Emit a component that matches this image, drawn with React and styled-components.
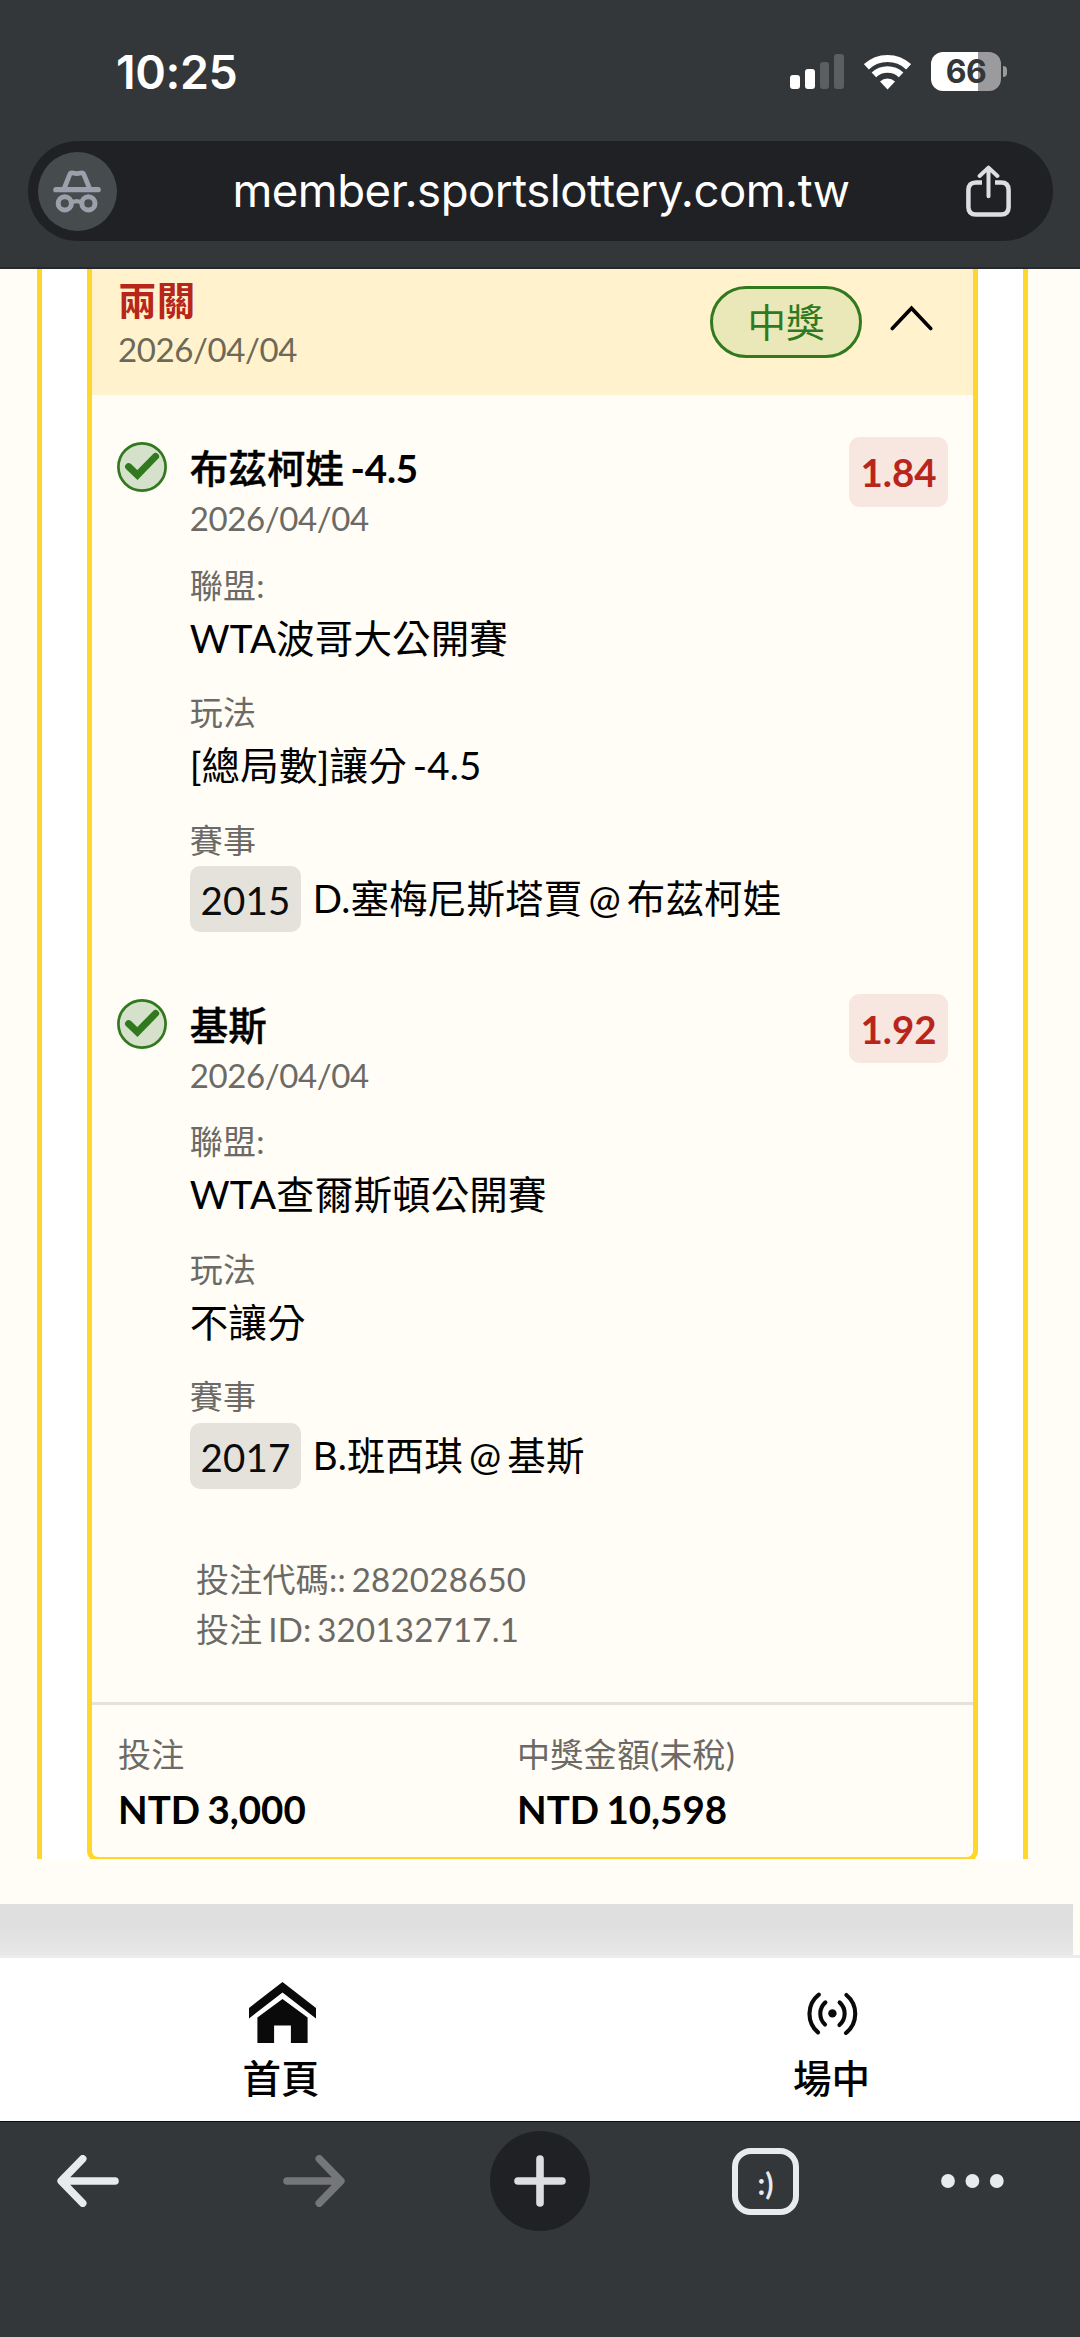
import React from "react";
import styled, { createGlobalStyle } from "styled-components";

const LATO = `Lato, "Noto Sans CJK TC", sans-serif`;
const SYSTEM = `Inter, "Noto Sans CJK TC", sans-serif`;

const GlobalStyle = createGlobalStyle`
  *, *::before, *::after { box-sizing: border-box; }
  body { margin: 0; background: #33373a; }
  svg { display: block; flex: none; }
`;

const Screen = styled.div`
  width: 1080px;
  height: 2337px;
  display: flex;
  flex-direction: column;
  overflow: hidden;
  background: #33373a;
  font-family: ${LATO};
  color: #000;
`;

/* ---------- browser chrome, top ---------- */

const TopChrome = styled.header`
  height: 269px;
  flex: none;
  font-family: ${SYSTEM};
  border-bottom: 2px solid #26292b;
`;

const StatusBar = styled.div`
  height: 141px;
  padding: 0 73px 0 116px;
  display: flex;
  justify-content: space-between;
`;

const Clock = styled.div`
  margin-top: 44px;
  line-height: 56px;
  font-size: 46.5px;
  font-weight: 600;
  letter-spacing: -0.4px;
  color: #fff;
`;

const StatusIcons = styled.div`
  margin-top: 52px;
  height: 39px;
  display: flex;
  align-items: center;
`;

const Signal = styled.div`
  display: flex;
  align-items: flex-end;
  gap: 5px;
  height: 35px;
  margin-right: 20px;
`;

const Bar = styled.i`
  width: 9.7px;
  height: ${(p) => p.$h}px;
  border-radius: 3px;
  background: ${(p) => (p.$on ? "#fff" : "#5d5e60")};
`;

const Battery = styled.div`
  width: 70px;
  height: 39px;
  margin-left: 20px;
  border-radius: 12px;
  background: linear-gradient(90deg, #fff 67%, #9b9b9d 67%);
  color: #33373a;
  font-size: 32px;
  font-weight: 700;
  letter-spacing: -0.5px;
  line-height: 39px;
  text-align: center;
`;

const Nub = styled.i`
  width: 4px;
  height: 11px;
  margin-left: 2px;
  border-radius: 0 6px 6px 0;
  background: #9b9b9d;
`;

const AddressBar = styled.div`
  margin: 0 27.5px;
  height: 100px;
  padding: 0 42px 0 10px;
  border-radius: 50px;
  background: #202125;
  display: flex;
  align-items: center;
  justify-content: space-between;
`;

const Incognito = styled.div`
  width: 79px;
  height: 79px;
  border-radius: 50%;
  background: #464b4e;
  display: flex;
  align-items: center;
  justify-content: center;
`;

const Url = styled.div`
  flex: 1;
  text-align: center;
  font-size: 45.5px;
  line-height: 56px;
  letter-spacing: -0.48px;
  color: #fff;
  white-space: nowrap;
`;

/* ---------- page ---------- */

const Page = styled.main`
  height: 1686px;
  flex: none;
  background: #fffdf5;
`;

const Viewport = styled.div`
  height: 1590px;
  overflow: hidden;
  padding: 0 52px 0 37px;
`;

const Frame = styled.div`
  padding: 0 45px;
  border: solid #ffd72b;
  border-width: 0 5px;
  background: #fff;
`;

const Card = styled.article`
  height: 1593px;
  border: solid #ffd72b;
  border-width: 0 5px 5px;
  border-radius: 0 0 11px 11px;
  background: #fffdf5;
`;

const CardHeader = styled.div`
  height: 126px;
  padding: 8px 40px 0 26px;
  display: flex;
  align-items: flex-start;
  background: #fff2cc;
`;

const HeaderText = styled.div`
  flex: 1;
`;

const Title = styled.div`
  font-size: 38.5px;
  line-height: 46px;
  font-weight: 700;
  letter-spacing: 0.2px;
  color: #b8261b;
`;

const Small = styled.div`
  font-size: 33px;
  line-height: 40px;
  letter-spacing: 0.3px;
  color: #6b6a66;
`;

const DateLine = styled(Small)`
  margin-top: ${(p) => p.$mt}px;
  letter-spacing: -0.4px;
  color: ${(p) => p.$c || "#6b6a66"};
`;

const ResultPill = styled.div`
  width: 152px;
  height: 72px;
  margin: 9px 28px 0 0;
  border: 3px solid #31791f;
  border-radius: 36px;
  background: #eae7b8;
  color: #31791f;
  font-size: 38.5px;
  line-height: 66px;
  text-align: center;
`;

const Toggle = styled.div`
  margin-top: 28px;
`;

const Leg = styled.section`
  height: 556.5px;
  display: flex;
  align-items: flex-start;
  padding: 0 25px;
`;

const Legs = styled.div`
  padding-top: 42px;
`;

const Mark = styled.div`
  margin-top: 5px;
  width: 50px;
`;

const LegBody = styled.div`
  flex: 1;
  padding: 8px 0 0 22.7px;
`;

const Pick = styled.div`
  font-size: 38.5px;
  line-height: 46px;
  font-weight: 500;
  letter-spacing: 0.1px;
  -webkit-text-stroke: 0.4px #000;
`;

const Handicap = styled.span`
  margin-left: 6.5px;
  font-weight: 700;
  letter-spacing: -0.2px;
  -webkit-text-stroke: 0;
`;

const Field = styled.div`
  margin-top: ${(p) => p.$mt}px;
`;

const Value = styled.div`
  margin-top: 10px;
  margin-bottom: -0.5px;
  font-size: 38.5px;
  line-height: 46px;
  letter-spacing: 0.15px;
  word-spacing: -4px;
  white-space: nowrap;
`;

const Match = styled.div`
  margin-top: 6.5px;
  display: flex;
  font-size: 38.5px;
  line-height: 64px;
  letter-spacing: 0.15px;
  word-spacing: -4px;
  white-space: nowrap;
`;

const Code = styled.span`
  width: 111.5px;
  height: 66.3px;
  margin-right: 11.5px;
  border-radius: 10px;
  background: #e5e2dc;
  color: #0c0c0c;
  line-height: 68px;
  text-align: center;
`;

const Odds = styled.div`
  width: 99px;
  height: 69.5px;
  border-radius: 11px;
  background: #f8e6e0;
  color: #b8261b;
  font-size: 38.5px;
  line-height: 70px;
  font-weight: 700;
  text-align: center;
`;

const Codes = styled.div`
  height: 152px;
  padding: 3.5px 0 0 104px;
`;

const CodeLine = styled.div`
  font-size: 33px;
  line-height: 50px;
  letter-spacing: 0.25px;
  word-spacing: -3px;
  color: #6b6a66;
`;

const Totals = styled.div`
  border-top: 3px solid #e5e2dc;
  padding: 28.5px 26px 0;
  display: grid;
  grid-template-columns: 399px 1fr;
`;

const Amount = styled.div`
  margin-top: 12.5px;
  font-size: 38.5px;
  line-height: 46px;
  font-weight: 700;
  word-spacing: -2px;
`;

const NextBlock = styled.div`
  width: 1073px;
  height: 51px;
  margin-top: 45px;
  background: linear-gradient(#dedede, #e0e0e0 45%, #e7e7e7);
`;

/* ---------- bottom ---------- */

const TabNav = styled.nav`
  height: 167px;
  flex: none;
  display: flex;
  background: #fff;
  border-top: 3px solid #ececec;
  border-bottom: 1px solid #0d0e0f;
`;

const Tab = styled.div`
  width: ${(p) => p.$w}px;
  padding-left: ${(p) => p.$pl}px;
  display: flex;
  flex-direction: column;
  align-items: center;
  font-size: 38.5px;
  font-weight: 500;
  line-height: 46px;
`;

const TabIcon = styled.div`
  height: 97px;
  padding: ${(p) => p.$pt}px 0 0 2px;
`;

const Toolbar = styled.footer`
  flex: 1;
  display: flex;
  align-items: flex-start;
  padding: 9px 77px 0 57px;
`;

const Tool = styled.div`
  height: 100px;
  width: ${(p) => p.$w}px;
  margin-right: ${(p) => p.$mr || 0}px;
  display: flex;
  align-items: center;
  justify-content: center;
`;

const NewTab = styled(Tool)`
  border-radius: 50%;
  background: #202125;
`;

const TabSwitch = styled.div`
  width: 67px;
  height: 67px;
  border: 6px solid #e8ebee;
  border-radius: 19px;
  color: #e8ebee;
  font-family: Lato, sans-serif;
  font-size: 30px;
  font-weight: 700;
  line-height: 58px;
  text-align: center;
`;

/* ---------- icons ---------- */

const WifiIcon = () => (
  <svg width="47" height="36" viewBox="0 0 47 36" fill="none" stroke="#fff">
    <path d="M2.4 12.8A31 31 0 0 1 44.6 12.8" strokeWidth="7.2" />
    <path d="M9.9 20.9A20 20 0 0 1 37.1 20.9" strokeWidth="6.6" />
    <path d="M16 27.5A11 11 0 0 1 31 27.5L23.5 35.5Z" fill="#fff" stroke="none" />
  </svg>
);

const IncognitoIcon = () => (
  <svg width="48" height="43" viewBox="0 0 48 43" fill="none" stroke="#9ba0aa" strokeLinecap="round" strokeLinejoin="round">
    <path d="M2.8 19.7H45.2" strokeWidth="5.2" />
    <path d="M11.4 18L16.7 4.6Q17.6 2.3 20 3Q23.8 4.2 27.6 3Q30 2.3 30.9 4.6L36.4 18" strokeWidth="4.8" />
    <circle cx="11.8" cy="33.4" r="6.6" strokeWidth="5" />
    <circle cx="35.4" cy="33.4" r="6.6" strokeWidth="5" />
    <path d="M19 32.4Q23.6 29.8 28.2 32.4" strokeWidth="4.2" />
  </svg>
);

const ShareIcon = () => (
  <svg width="45" height="52" viewBox="0 0 45 52" fill="none" stroke="#dcdee2" strokeWidth="4.5">
    <path d="M16 17.4H10Q2.4 17.4 2.4 25V42Q2.4 49.6 10 49.6H35Q42.6 49.6 42.6 42V25Q42.6 17.4 35 17.4H29" />
    <path d="M22.5 31.2V3M13.6 11L22.5 2.6L31.4 11" strokeLinecap="round" strokeLinejoin="round" strokeWidth="4" />
  </svg>
);

const ChevronUp = () => (
  <svg width="43" height="26" viewBox="0 0 43 26" fill="none" stroke="#000" strokeWidth="3.6" strokeLinecap="round">
    <path d="M2.3 23.5L21.5 3.2L40.7 23.5" />
  </svg>
);

const CheckIcon = () => (
  <svg width="50" height="50" viewBox="0 0 50 50" fill="none" stroke="#31791f">
    <circle cx="25" cy="25" r="23.6" fill="#d6e1cb" strokeWidth="2.7" />
    <path d="M11.6 24.6L20.4 33L38.6 14.4" strokeWidth="7" strokeLinecap="round" />
  </svg>
);

const HomeIcon = () => (
  <svg width="67" height="61" viewBox="0 0 67 61" fill="#0a0a0a">
    <path d="M0 26L33.5 0L67 26V36.4L33.5 10.6L0 36.4Z" />
    <path d="M8.4 35.5L33.5 17L58.6 35.5V61H41.9V43.6H25.1V61H8.4Z" />
  </svg>
);

const LiveIcon = () => (
  <svg width="51" height="43" viewBox="0 0 51 43" fill="none" stroke="#0a0a0a" strokeWidth="4.1" strokeLinecap="round">
    <circle cx="25.4" cy="21.4" r="4.2" fill="#0a0a0a" stroke="none" />
    <path d="M18.4 10.4A15 15 0 0 0 18 32.6M32.6 10.4A15 15 0 0 1 32.4 33" />
    <path d="M11.8 2.6A24.5 24.5 0 0 0 11 40.4M39.4 3A24.5 24.5 0 0 1 39 41" />
  </svg>
);

const ArrowIcon = ({ color, flip }) => (
  <svg width="62" height="52" viewBox="0 0 62 52" fill="none" stroke={color} strokeWidth="7.6" strokeLinecap="round" strokeLinejoin="round">
    <path d={flip ? "M36.3 3.8L57.8 26L36.3 48.2M57 26H4" : "M25.7 3.8L4.2 26L25.7 48.2M5 26H58"} />
  </svg>
);

const PlusIcon = () => (
  <svg width="52" height="52" viewBox="0 0 52 52" stroke="#dcdee2" strokeWidth="7.6" strokeLinecap="round">
    <path d="M4 26H48M26 4V48" />
  </svg>
);

const DotsIcon = () => (
  <svg width="63" height="14" viewBox="0 0 63 14" fill="#e8ebee">
    <circle cx="7" cy="7" r="6.9" />
    <circle cx="31.4" cy="7" r="6.9" />
    <circle cx="55.8" cy="7" r="6.9" />
  </svg>
);

/* ---------- data ---------- */

const legs = [
  {
    pick: "布茲柯娃",
    handicap: "-4.5",
    date: "2026/04/04",
    odds: "1.84",
    league: "WTA波哥大公開賽",
    market: "[總局數]讓分 -4.5",
    code: "2015",
    match: "D.塞梅尼斯塔賈 @ 布茲柯娃",
  },
  {
    pick: "基斯",
    date: "2026/04/04",
    odds: "1.92",
    league: "WTA查爾斯頓公開賽",
    market: "不讓分",
    code: "2017",
    match: "B.班西琪 @ 基斯",
  },
];

const BetLeg = ({ leg }) => (
  <Leg>
    <Mark>
      <CheckIcon />
    </Mark>
    <LegBody>
      <Pick>
        {leg.pick}
        {leg.handicap && <Handicap>{leg.handicap}</Handicap>}
      </Pick>
      <DateLine $mt={7}>{leg.date}</DateLine>
      <Field $mt={26.5}>
        <Small>聯盟:</Small>
        <Value>{leg.league}</Value>
      </Field>
      <Field $mt={32}>
        <Small>玩法</Small>
        <Value>{leg.market}</Value>
      </Field>
      <Field $mt={32}>
        <Small>賽事</Small>
        <Match>
          <Code>{leg.code}</Code>
          {leg.match}
        </Match>
      </Field>
    </LegBody>
    <Odds>{leg.odds}</Odds>
  </Leg>
);

export default function App() {
  return (
    <Screen lang="zh-Hant">
      <GlobalStyle />
      <TopChrome>
        <StatusBar>
          <Clock>10:25</Clock>
          <StatusIcons>
            <Signal>
              <Bar $h={14} $on />
              <Bar $h={20} $on />
              <Bar $h={27} />
              <Bar $h={35} />
            </Signal>
            <WifiIcon />
            <Battery>66</Battery>
            <Nub />
          </StatusIcons>
        </StatusBar>
        <AddressBar>
          <Incognito>
            <IncognitoIcon />
          </Incognito>
          <Url>member.sportslottery.com.tw</Url>
          <ShareIcon />
        </AddressBar>
      </TopChrome>

      <Page>
        <Viewport>
          <Frame>
            <Card>
              <CardHeader>
                <HeaderText>
                  <Title>兩關</Title>
                  <DateLine $mt={6} $c="#6d6857">2026/04/04</DateLine>
                </HeaderText>
                <ResultPill>中獎</ResultPill>
                <Toggle>
                  <ChevronUp />
                </Toggle>
              </CardHeader>
              <Legs>
                {legs.map((leg) => (
                  <BetLeg key={leg.code} leg={leg} />
                ))}
              </Legs>
              <Codes>
                <CodeLine>投注代碼:: 282028650</CodeLine>
                <CodeLine>投注 ID: 320132717.1</CodeLine>
              </Codes>
              <Totals>
                <div>
                  <Small>投注</Small>
                  <Amount>NTD 3,000</Amount>
                </div>
                <div>
                  <Small>中獎金額(未稅)</Small>
                  <Amount>NTD 10,598</Amount>
                </div>
              </Totals>
            </Card>
          </Frame>
        </Viewport>
        <NextBlock />
      </Page>

      <TabNav>
        <Tab $w={562} $pl={0}>
          <TabIcon $pt={24}>
            <HomeIcon />
          </TabIcon>
          首頁
        </Tab>
        <Tab $w={518} $pl={21}>
          <TabIcon $pt={34}>
            <LiveIcon />
          </TabIcon>
          場中
        </Tab>
      </TabNav>

      <Toolbar>
        <Tool $w={62} $mr={164}>
          <ArrowIcon color="#e8ebee" />
        </Tool>
        <Tool $w={62} $mr={145}>
          <ArrowIcon color="#757678" flip />
        </Tool>
        <NewTab $w={100} $mr={142}>
          <PlusIcon />
        </NewTab>
        <Tool $w={67} $mr={142}>
          <TabSwitch>:)</TabSwitch>
        </Tool>
        <Tool $w={62}>
          <DotsIcon />
        </Tool>
      </Toolbar>
    </Screen>
  );
}
